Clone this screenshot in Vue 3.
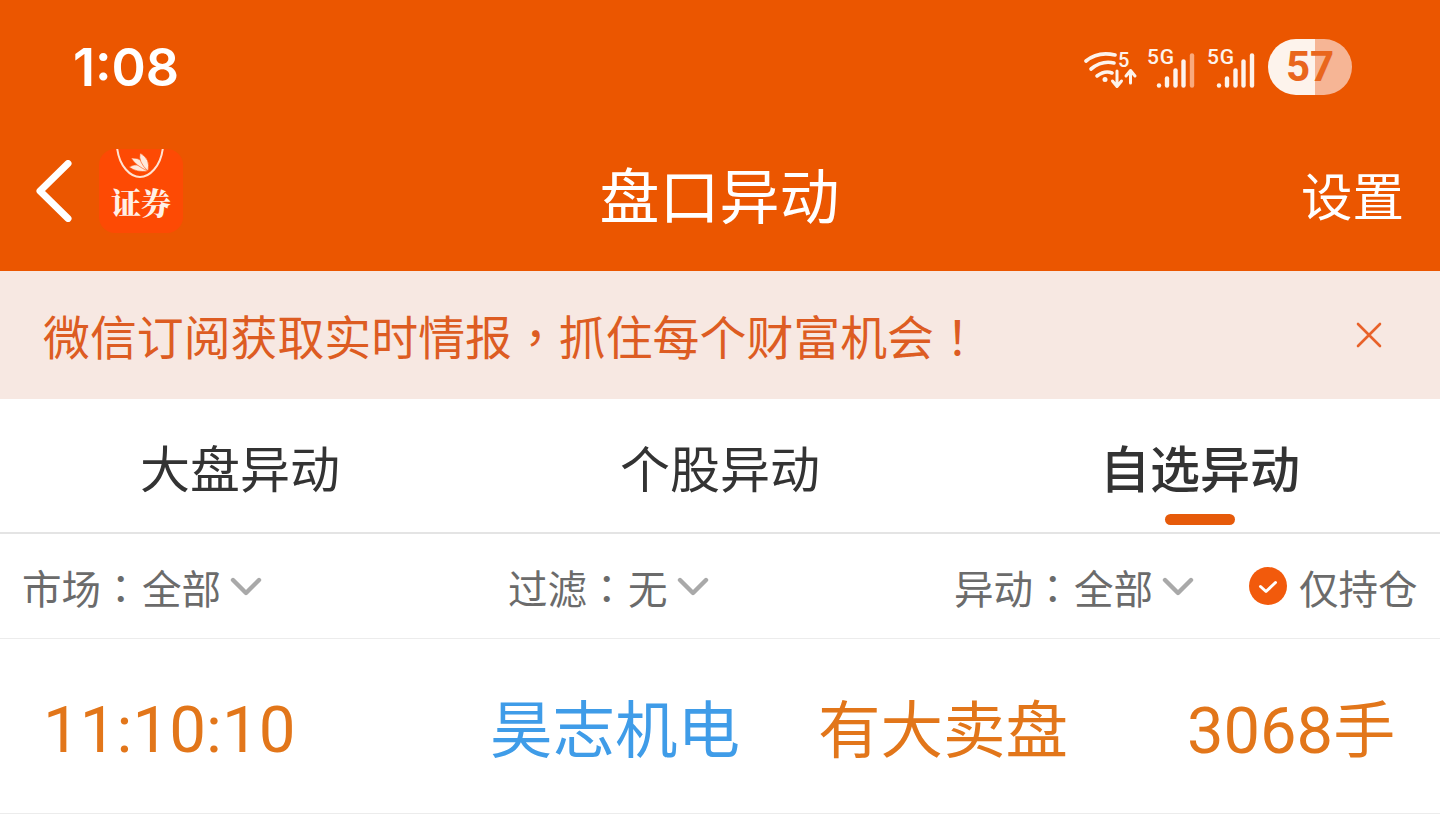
<template>
  <div class="page">
    <header class="top">
      <div class="status">
        <span class="clock">1:08</span>
        <div class="status-icons">
          <div class="wifi-wrap">
            <svg width="54" height="40" viewBox="0 0 54 40" fill="none" stroke="#fdf3ec" stroke-linecap="round" stroke-linejoin="round">
              <path d="M2 11 Q14 1 31 5" stroke-width="3.6" />
              <path d="M7 19 Q18 10 30 13" stroke-width="3.6" />
              <path d="M13 26 Q21 20 28 23" stroke-width="3.6" />
              <circle cx="21" cy="29.500" r="2.500" fill="#fdf3ec" stroke="none" />
              <path d="M33 21v15M28.500 31l4.500 5.500 4.500-5.500" stroke-width="3" />
              <path d="M46.500 33V21M42 26l4.500-5.500L51 26" stroke-width="3" />
            </svg>
            <span class="wifi-num">5</span>
          </div>
          <div class="sig" v-for="(s, i) in signals" :key="i">
            <span class="sig-label">5G</span>
            <svg width="48" height="42" viewBox="0 0 48 42" stroke-width="4.400" stroke-linecap="round">
              <path v-for="(b, j) in bars" :key="j" :d="b" :stroke="i === 0 && j === 4 ? '#f9a97c' : '#fdf3ec'" />
            </svg>
          </div>
          <div class="battery">
            <span class="batt-num">57</span>
          </div>
        </div>
      </div>
      <nav class="nav">
        <div class="nav-left">
          <svg width="38" height="62" viewBox="0 0 38 62" fill="none" stroke="#fff" stroke-width="7" stroke-linecap="round" stroke-linejoin="round">
            <path d="M33 3.500 L5 31 L33 58.500" />
          </svg>
          <div class="logo">
            <svg class="logo-mark" width="52" height="32" viewBox="0 0 52 32" fill="none">
              <path d="M2 -2 C4 18 16 28 25 28 C34 28 46 18 48 -2" stroke="#ffe3d3" stroke-width="2" />
              <g fill="#ffe9dc" stroke="#fd4a04" stroke-width=".6">
                <path d="M33 22 Q22 24 14 18 Q24 12 33 22Z" />
                <path d="M33 22 Q21 17 16 9 Q29 8 33 22Z" />
                <path d="M33 22 Q23 13 25 4 Q36 10 33 22Z" />
              </g>
            </svg>
            <span class="logo-text">证券</span>
          </div>
        </div>
        <h1 class="title">盘口异动</h1>
        <span class="setting">设置</span>
      </nav>
    </header>

    <div class="banner">
      <span>微信订阅获取实时情报<span class="punct">，</span>抓住每个财富机会<span class="punct">！</span></span>
      <svg width="26" height="26" viewBox="0 0 26 26" stroke="#e8622a" stroke-width="2.600" stroke-linecap="round">
        <path d="M2 2 L24 24 M24 2 L2 24" />
      </svg>
    </div>

    <div class="tabs">
      <div class="tab" v-for="t in tabs" :key="t" :class="{ active: t === '自选异动' }">{{ t }}</div>
    </div>

    <div class="filters">
      <div class="filter" v-for="f in filters" :key="f.label" :class="f.cls">
        <span>{{ f.label }}</span>
        <span class="punct colon">：</span>
        <span>{{ f.value }}</span>
        <svg class="chev" width="32" height="20" viewBox="0 0 32 20" fill="none" stroke="#a9a9a9" stroke-width="4.400" stroke-linecap="round" stroke-linejoin="round">
          <path d="M3 3 L16 16 L29 3" />
        </svg>
      </div>
      <div class="only">
        <svg width="38" height="38" viewBox="0 0 38 38" fill="none">
          <circle cx="19" cy="19" r="19" fill="#f25a0c" />
          <path d="M11.500 19.500 L17 24.500 L26.500 15.500" stroke="#fff" stroke-width="3" stroke-linecap="round" stroke-linejoin="round" />
        </svg>
        <span>仅持仓</span>
      </div>
    </div>

    <div class="row">
      <span class="time">11:10:10</span>
      <span class="stock">昊志机电</span>
      <span class="event">有大卖盘</span>
      <span class="amount">3068<span class="unit">手</span></span>
    </div>
  </div>
</template>

<script setup>
const signals = [0, 1]
const bars = ['M12 38.500v-.1', 'M20 38.500v-7', 'M28.500 38.500v-15', 'M36.500 38.500v-24', 'M45 38.500v-30']
const tabs = ['大盘异动', '个股异动', '自选异动']
const filters = [
  { label: '市场', value: '全部', cls: 'f1' },
  { label: '过滤', value: '无', cls: 'f2' },
  { label: '异动', value: '全部', cls: 'f3' },
]
</script>

<style>
html, body { background: #fff; }
</style>

<style scoped>
.page {
  width: 1440px;
  height: 839px;
  overflow: hidden;
  background: #fff;
  font-family: Roboto, "Noto Sans CJK SC", sans-serif;
}

.punct {
  font-family: "Noto Sans CJK TC", sans-serif;
}

.top {
  background: #eb5600;
  height: 271px;
  color: #fff;
}

.status {
  height: 132px;
  display: flex;
  align-items: center;
  justify-content: space-between;
  padding: 2px 88px 0 73px;
  box-sizing: border-box;
}

.clock {
  font-family: Inter, sans-serif;
  font-size: 52px;
  font-weight: 600;
  color: #fff;
}

.status-icons {
  display: flex;
  align-items: flex-start;
  height: 56px;
  font-family: Roboto, sans-serif;
  color: #fdf3ec;
}

.wifi-wrap {
  position: relative;
  width: 54px;
  height: 40px;
  margin-top: 11px;
}

.wifi-num {
  position: absolute;
  left: 34px;
  top: -1px;
  font-size: 20px;
  font-weight: 500;
  line-height: 22px;
}

.sig {
  position: relative;
  width: 48px;
  height: 42px;
  margin: 8px 0 0 9px;
}

.sig + .sig { margin-left: 12px; }

.sig-label {
  position: absolute;
  left: 0;
  top: -1px;
  font-size: 21px;
  font-weight: 500;
  line-height: 22px;
  letter-spacing: .8px;
}

.battery {
  width: 84px;
  height: 56px;
  margin-left: 13px;
  border-radius: 28px;
  background: linear-gradient(90deg, #fdf3ec 0, #fdf3ec 47px, #f6b595 47px);
  display: flex;
  align-items: center;
  justify-content: center;
}

.batt-num {
  font-size: 42px;
  font-weight: 700;
  line-height: 1;
  color: #e9661d;
}

.nav {
  height: 139px;
  display: grid;
  grid-template-columns: 1fr auto 1fr;
  align-items: center;
  padding: 0 36px 0 35px;
}

.nav-left {
  display: flex;
  align-items: center;
  gap: 26px;
  margin-top: -22px;
}

.logo {
  width: 84px;
  height: 84px;
  border-radius: 16px;
  background: #fd4a04;
  position: relative;
  overflow: hidden;
  display: flex;
  justify-content: center;
  align-items: flex-end;
}

.logo-mark {
  position: absolute;
  left: 16px;
  top: 0;
}

.logo-text {
  font-family: "Noto Serif CJK SC", "Noto Sans CJK SC", sans-serif;
  font-size: 30px;
  font-weight: 900;
  line-height: 1;
  color: #fff0e6;
  margin-bottom: 17px;
}

.title {
  margin: -6px 0 0;
  font-size: 60px;
  font-weight: 400;
  line-height: 1;
}

.setting {
  justify-self: end;
  font-size: 51.500px;
  line-height: 1;
  margin-top: -6px;
}

.banner {
  height: 128px;
  background: #f7e8e2;
  color: #dd5c22;
  font-size: 46.900px;
  display: flex;
  align-items: center;
  justify-content: space-between;
  padding: 0 58px 0 43px;
}

.tabs {
  height: 133px;
  display: grid;
  grid-template-columns: repeat(3, 1fr);
  border-bottom: 2px solid #e4e4e4;
}

.tab {
  position: relative;
  display: flex;
  align-items: center;
  justify-content: center;
  padding-top: 1px;
  font-size: 50px;
  color: #333;
}

.tab.active {
  font-weight: 500;
}

.tab.active::after {
  content: "";
  position: absolute;
  left: 50%;
  bottom: 7px;
  width: 70px;
  height: 11px;
  margin-left: -35px;
  border-radius: 6px;
  background: #e65a0a;
}

.filters {
  height: 104px;
  border-bottom: 1px solid #ececec;
  display: flex;
  align-items: center;
  font-size: 39.500px;
  color: #6b6b6b;
}

.filter {
  display: flex;
  align-items: center;
}

.f1 { margin-left: 22px; width: 486px; }
.f2 { width: 446px; }
.f3 { width: 295px; }

.colon { width: 41px; }

.chev { margin-left: 9px; margin-top: 2px; }

.only {
  display: flex;
  align-items: center;
  gap: 12px;
}

.row {
  height: 172px;
  border-bottom: 1px solid #ececec;
  display: flex;
  align-items: center;
  padding-top: 2px;
  font-size: 62.500px;
  color: #e2761a;
}

.time { margin: 4px 0 0 43px; width: 447px; font-size: 65.500px; }
.stock { width: 328px; margin-top: -3px; color: #3f9ce8; }
.event { width: 369px; margin-top: -3px; }
.amount { margin-top: -3px; font-size: 65px; }
.unit { font-size: 62px; }
</style>
